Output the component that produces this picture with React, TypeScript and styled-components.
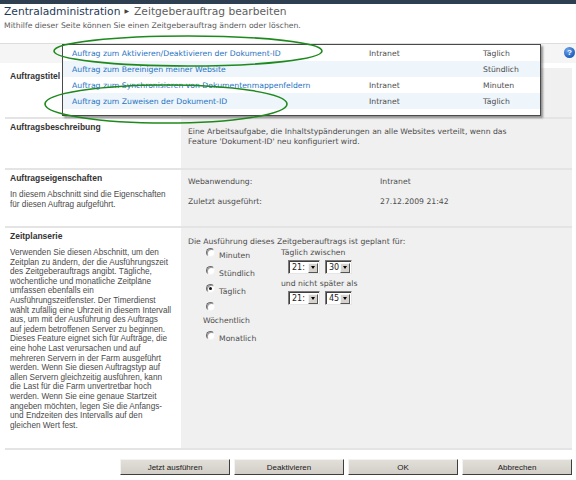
import React from "react";
import styled, { createGlobalStyle } from "styled-components";

const GlobalStyle = createGlobalStyle`
  html, body {
    margin: 0;
    padding: 0;
    background: #fff;
  }
  body {
    font-family: "DejaVu Sans", Verdana, sans-serif;
    width: 576px;
    height: 480px;
    overflow: hidden;
  }
`

const Page = styled.div`
  position: relative;
  width: 576px;
  height: 480px;
  display: flex;
  flex-direction: column;
`

const TopBar = styled.div`
  height: 4px;
  background: #2f3f52;
`

const Header = styled.div`
  height: 39px;
  padding-left: 4px;
  box-sizing: border-box;
`

const Title = styled.h1`
  margin: 0;
  font-size: 10.7px;
  font-weight: normal;
  line-height: 14px;
  color: #1f3a58;
  white-space: nowrap;
`

const Crumb = styled.span`
  color: #5e5e5e;
`

const Arrow = styled.span`
  font-size: 6px;
  margin: 0 5px 0 4px;
  color: #444;
  vertical-align: 2px;
`

const Subtitle = styled.div`
  margin-top: 2px;
  font-size: 7.7px;
  line-height: 10px;
  color: #5b5b5b;
  white-space: nowrap;
`

const Strip = styled.div`
  height: 19px;
  border-top: 1px solid #dedede;
  background: #f5f5f5;
  display: flex;
  justify-content: flex-end;
  align-items: center;
  padding-right: 1px;
`

const HelpIcon = styled.div`
  width: 11px;
  height: 11px;
  border-radius: 50%;
  background: radial-gradient(circle at 35% 30%, #6fa6ea, #1f5fbf 70%);
  color: #fff;
  font: bold 8px/11px "Liberation Sans", Arial, sans-serif;
  text-align: center;
  margin-top: -3px;
`

const FormTable = styled.div`
  margin: 5px 4px 0 5px;
  display: flex;
  flex-direction: column;
`

const Row = styled.div<{ $height: number }>`
  display: grid;
  grid-template-columns: 176px 1fr;
  height: ${p => p.$height}px;
  border-bottom: 2px solid #e4e4e4;
`

const LeftCell = styled.div`
  padding: 3px 4px 0 5px;
  background: #fff;
`

const Label = styled.div`
  font: bold 8.5px/11px "Liberation Sans", Arial, sans-serif;
  color: #333;
`

const Desc = styled.div<{ $top: number }>`
  margin-top: ${p => p.$top}px;
  font: 8.2px/9.6px "Liberation Sans", Arial, sans-serif;
  color: #4a4a4a;
  white-space: nowrap;
`

const RightCell = styled.div<{ $top: number }>`
  background: #f0f0f0;
  padding: ${p => p.$top}px 8px 0 7px;
  font-size: 7.7px;
  line-height: 10px;
  color: #4c4c4c;
`

const PropGrid = styled.div`
  display: grid;
  grid-template-columns: 192px 1fr;
  row-gap: 9px;
  line-height: 11px;
`

const Schedule = styled.div`
  display: flex;
  align-items: flex-start;
`

const RadioList = styled.div`
  width: 56px;
  margin: 3px 0 0 15px;
  line-height: 11px;
`

const RadioItem = styled.div`
  margin-bottom: 7px;
`

const RadioCircle = styled.span<{ $checked?: boolean }>`
  display: inline-block;
  position: relative;
  top: -2px;
  width: 7px;
  height: 7px;
  margin: 0 4px 0 3px;
  border-radius: 50%;
  border: 1px solid;
  border-color: #6a6a6a #f4f4f4 #f4f4f4 #6a6a6a;
  background: #fff;
  vertical-align: top;
  box-shadow: inset 1px 1px 0 #9a9a9a;

  &::after {
    content: "";
    display: ${p => (p.$checked ? "block" : "none")};
    position: absolute;
    left: 2px;
    top: 2px;
    width: 3px;
    height: 3px;
    border-radius: 50%;
    background: #111;
  }
`

const Times = styled.div`
  margin-left: 22px;
  line-height: 11px;
`

const SelectRow = styled.div`
  display: flex;
  gap: 5px;
  margin: 2px 0 4px 7px;
`

const Select = styled.div<{ $width: number }>`
  width: ${p => p.$width}px;
  height: 14px;
  box-sizing: border-box;
  display: flex;
  align-items: center;
  justify-content: space-between;
  background: #fff;
  border: 1px solid;
  border-color: #7a7a7a #e6e6e6 #e6e6e6 #7a7a7a;
  box-shadow: inset 1px 1px 0 #404040;
  padding: 1px 1px 0 3px;
  font-size: 8px;
  color: #222;
`

const SelectButton = styled.span`
  width: 10px;
  height: 10px;
  background: #d6d3ce;
  border: 1px solid;
  border-color: #f4f4f4 #555 #555 #f4f4f4;
  box-sizing: border-box;
  display: flex;
  align-items: center;
  justify-content: center;

  &::after {
    content: "";
    border-left: 2.5px solid transparent;
    border-right: 2.5px solid transparent;
    border-top: 3px solid #000;
  }
`

const ButtonBar = styled.div`
  display: flex;
  justify-content: flex-end;
  gap: 4px;
  margin: 9px 4px 0 0;
`

const Button = styled.button`
  width: 110px;
  height: 16px;
  padding: 0;
  background: linear-gradient(#e2dfd9, #d2cec7);
  border: 1px solid;
  border-color: #f3f3f3 #3e3e3e #3e3e3e #f3f3f3;
  font: 8px "Liberation Sans", Arial, sans-serif;
  color: #1a1a1a;
`

const Popup = styled.div`
  position: absolute;
  left: 62px;
  top: 44px;
  width: 479px;
  height: 72px;
  box-sizing: border-box;
  border: 1px solid #4a4a4a;
  background: #fff;
  box-shadow: 2px 2px 2px rgba(0, 0, 0, 0.4);
  overflow: hidden;
`

const PopupRow = styled.div<{ $alt: boolean }>`
  display: grid;
  grid-template-columns: 297px 114px 1fr;
  height: 16px;
  align-items: center;
  padding-left: 9px;
  background: ${p => (p.$alt ? "#eef5fb" : "#fff")};
  font-size: 7.7px;
  color: #4c4c4c;
  white-space: nowrap;
`

const JobLink = styled.span`
  color: #1f73c2;
`

const Marks = styled.svg`
  position: absolute;
  left: 0;
  top: 0;
  pointer-events: none;
`

const jobs = [
  { name: "Auftrag zum Aktivieren/Deaktivieren der Dokument-ID", app: "Intranet", freq: "Täglich" },
  { name: "Auftrag zum Bereinigen meiner Website", app: "", freq: "Stündlich" },
  { name: "Auftrag zum Synchronisieren von Dokumentenmappenfeldern", app: "Intranet", freq: "Minuten" },
  { name: "Auftrag zum Zuweisen der Dokument-ID", app: "Intranet", freq: "Täglich" },
]

const scheduleText = [
  "Verwenden Sie diesen Abschnitt, um den",
  "Zeitplan zu ändern, der die Ausführungszeit",
  "des Zeitgeberauftrags angibt. Tägliche,",
  "wöchentliche und monatliche Zeitpläne",
  "umfassen ebenfalls ein",
  "Ausführungszeitfenster. Der Timerdienst",
  "wählt zufällig eine Uhrzeit in diesem Intervall",
  "aus, um mit der Ausführung des Auftrags",
  "auf jedem betroffenen Server zu beginnen.",
  "Dieses Feature eignet sich für Aufträge, die",
  "eine hohe Last verursachen und auf",
  "mehreren Servern in der Farm ausgeführt",
  "werden. Wenn Sie diesen Auftragstyp auf",
  "allen Servern gleichzeitig ausführen, kann",
  "die Last für die Farm unvertretbar hoch",
  "werden. Wenn Sie eine genaue Startzeit",
  "angeben möchten, legen Sie die Anfangs-",
  "und Endzeiten des Intervalls auf den",
  "gleichen Wert fest.",
]

const radios = [
  { label: "Minuten", checked: false },
  { label: "Stündlich", checked: false },
  { label: "Täglich", checked: true },
  { label: "Wöchentlich", checked: false },
  { label: "Monatlich", checked: false },
]

function App() {
  return (
    <Page>
      <GlobalStyle />
      <TopBar />
      <Header>
        <Title>
          Zentraladministration<Arrow>▶</Arrow><Crumb>Zeitgeberauftrag bearbeiten</Crumb>
        </Title>
        <Subtitle>Mithilfe dieser Seite können Sie einen Zeitgeberauftrag ändern oder löschen.</Subtitle>
      </Header>
      <Strip>
        <HelpIcon>?</HelpIcon>
      </Strip>

      <FormTable>
        <Row $height={49}>
          <LeftCell>
            <Label>Auftragstitel</Label>
          </LeftCell>
          <RightCell $top={8} />
        </Row>

        <Row $height={49}>
          <LeftCell>
            <Label>Auftragsbeschreibung</Label>
          </LeftCell>
          <RightCell $top={8}>
            Eine Arbeitsaufgabe, die Inhaltstypänderungen an alle Websites verteilt, wenn das
            <br />
            Feature 'Dokument-ID' neu konfiguriert wird.
          </RightCell>
        </Row>

        <Row $height={56}>
          <LeftCell>
            <Label>Auftragseigenschaften</Label>
            <Desc $top={6}>
              In diesem Abschnitt sind die Eigenschaften
              <br />
              für diesen Auftrag aufgeführt.
            </Desc>
          </LeftCell>
          <RightCell $top={6}>
            <PropGrid>
              <span>Webanwendung:</span>
              <span>Intranet</span>
              <span>Zuletzt ausgeführt:</span>
              <span>27.12.2009 21:42</span>
            </PropGrid>
          </RightCell>
        </Row>

        <Row $height={220}>
          <LeftCell>
            <Label>Zeitplanserie</Label>
            <Desc $top={6}>
              {scheduleText.map(line => (
                <div key={line}>{line}</div>
              ))}
            </Desc>
          </LeftCell>
          <RightCell $top={9}>
            Die Ausführung dieses Zeitgeberauftrags ist geplant für:
            <Schedule>
              <RadioList>
                {radios.map(r => (
                  <RadioItem key={r.label}>
                    <RadioCircle $checked={r.checked} />
                    {r.label}
                  </RadioItem>
                ))}
              </RadioList>
              <Times>
                Täglich zwischen
                <SelectRow>
                  <Select $width={32}>21:<SelectButton /></Select>
                  <Select $width={27}>30<SelectButton /></Select>
                </SelectRow>
                und nicht später als
                <SelectRow>
                  <Select $width={32}>21:<SelectButton /></Select>
                  <Select $width={27}>45<SelectButton /></Select>
                </SelectRow>
              </Times>
            </Schedule>
          </RightCell>
        </Row>
      </FormTable>

      <ButtonBar>
        <Button>Jetzt ausführen</Button>
        <Button>Deaktivieren</Button>
        <Button>OK</Button>
        <Button>Abbrechen</Button>
      </ButtonBar>

      <Popup>
        {jobs.map((job, i) => (
          <PopupRow key={job.name} $alt={i % 2 === 1}>
            <JobLink>{job.name}</JobLink>
            <span>{job.app}</span>
            <span>{job.freq}</span>
          </PopupRow>
        ))}
      </Popup>

      <Marks width="576" height="480" viewBox="0 0 576 480">
        <ellipse cx="188" cy="51" rx="134" ry="15" fill="none" stroke="#1e8a1e" strokeWidth="1.6" />
        <ellipse cx="166" cy="104" rx="121" ry="19" fill="none" stroke="#1e8a1e" strokeWidth="1.6" />
      </Marks>
    </Page>
  )
}

export default App
